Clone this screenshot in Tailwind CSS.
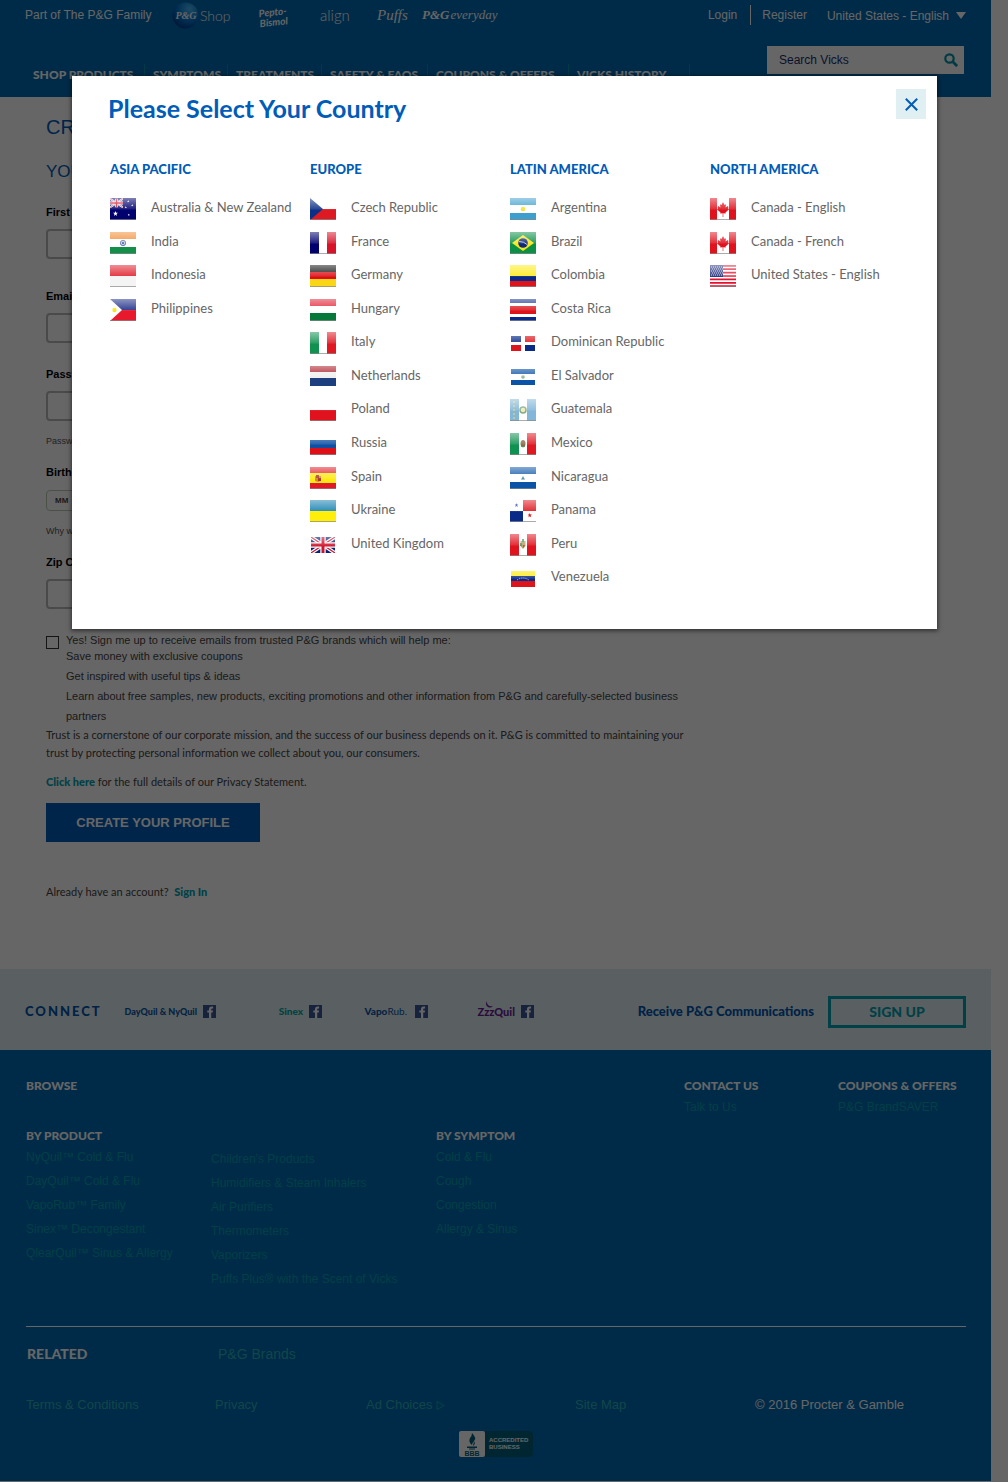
<!DOCTYPE html>
<html lang="en">
<head>
<meta charset="utf-8">
<title>Vicks - Create Your Profile</title>
<meta name="viewport" content="width=device-width, initial-scale=1">
<script src="https://cdn.jsdelivr.net/npm/@tailwindcss/browser@4"></script>
</head>
<body class="relative min-h-screen bg-white font-['Liberation_Sans',sans-serif] text-[12px] text-[#444]">

<!-- Flag artwork -->
<svg class="absolute size-0" aria-hidden="true">
  <defs>
    <linearGradient id="gloss" x1="0" y1="0" x2="0" y2="1">
      <stop offset="0" stop-color="#fff" stop-opacity=".5"/><stop offset=".5" stop-color="#fff" stop-opacity=".12"/><stop offset=".55" stop-color="#fff" stop-opacity="0"/>
    </linearGradient>
    <radialGradient id="ball" cx=".65" cy=".25" r=".9"><stop offset="0" stop-color="#4ab8f8"/><stop offset=".5" stop-color="#0077d0"/><stop offset="1" stop-color="#002a78"/></radialGradient>
    <symbol id="shine" viewBox="0 0 26 22"><path fill="url(#gloss)" d="M0 0h26v22H0z"/><path fill="#888" opacity=".7" d="M0 21h26v1H0z"/></symbol>
    <symbol id="jack" viewBox="0 0 24 16"><path fill="#00247d" d="M0 0h24v16H0z"/><path stroke="#fff" stroke-width="3.6" d="M0 0l24 16M24 0L0 16"/><path stroke="#cf142b" stroke-width="1.2" d="M0 0l24 16M24 0L0 16"/><path stroke="#fff" stroke-width="5.4" d="M12 0v16M0 8h24"/><path stroke="#cf142b" stroke-width="3" d="M12 0v16M0 8h24"/></symbol>
    <symbol id="star" viewBox="0 0 10 10"><path d="M5 0l1.3 3.5H10L7 5.8 8.1 10 5 7.4 1.9 10 3 5.8 0 3.5h3.7z"/></symbol>
    <symbol id="au" viewBox="0 0 26 22"><path fill="#00006e" d="M0 0h26v22H0z"/><use href="#jack" width="13" height="10" preserveAspectRatio="none"/><g fill="#fff"><use href="#star" x="3" y="13" width="5" height="5"/><use href="#star" x="17" y="2" width="2.5" height="2.5"/><use href="#star" x="14.500" y="8" width="2.500" height="2.500"/><use href="#star" x="21" y="6" width="2.500" height="2.500"/><use href="#star" x="17.500" y="15.500" width="2.500" height="2.500"/></g></symbol>
    <symbol id="in" viewBox="0 0 26 22"><path fill="#fff" d="M0 0h26v22H0z"/><path fill="#f28c33" d="M0 0h26v7H0z"/><path fill="#138f4a" d="M0 15h26v7H0z"/><circle cx="13" cy="11" r="2.700" fill="#c3cce8" stroke="#6f82bf"/><circle cx="13" cy="11" r="1" fill="#3a4f9f"/></symbol>
    <symbol id="id" viewBox="0 0 26 22"><path fill="#f4f4f4" d="M0 0h26v22H0z"/><path fill="#df1f2c" d="M0 0h26v11H0z"/></symbol>
    <symbol id="ph" viewBox="0 0 26 22"><path fill="#e8192c" d="M0 0h26v22H0z"/><path fill="#1a2a86" d="M0 0h26v11H0z"/><path fill="#fff" d="M0 0l12 11L0 22z"/><circle cx="4.500" cy="11" r="2.200" fill="#f5e51b"/></symbol>
    <symbol id="cz" viewBox="0 0 26 22"><path fill="#fff" d="M0 0h26v22H0z"/><path fill="#dd1a22" d="M0 11h26v11H0z"/><path fill="#0b2f86" d="M0 0l13 11L0 22z"/></symbol>
    <symbol id="fr" viewBox="0 0 26 22"><path fill="#fff" d="M0 0h26v22H0z"/><path fill="#00006e" d="M0 0h9v22H0z"/><path fill="#d81228" d="M17 0h9v22h-9z"/></symbol>
    <symbol id="de" viewBox="0 0 26 22"><path fill="#f9d616" d="M0 0h26v22H0z"/><path fill="#dd0d15" d="M0 0h26v14H0z"/><path fill="#111" d="M0 0h26v7H0z"/></symbol>
    <symbol id="hu" viewBox="0 0 26 22"><path fill="#fff" d="M0 0h26v22H0z"/><path fill="#e01e31" d="M0 0h26v7H0z"/><path fill="#06793a" d="M0 14h26v8H0z"/></symbol>
    <symbol id="it" viewBox="0 0 26 22"><path fill="#fff" d="M0 0h26v22H0z"/><path fill="#0f9150" d="M0 0h9v22H0z"/><path fill="#df1821" d="M17 0h9v22h-9z"/></symbol>
    <symbol id="nl" viewBox="0 0 26 22"><path fill="#eee" d="M0 0h26v20H0z"/><path fill="#a8121f" d="M0 0h26v6H0z"/><path fill="#1d3f80" d="M0 12h26v8H0z"/></symbol>
    <symbol id="pl" viewBox="0 0 26 22"><path fill="#fff" d="M0 0h26v22H0z"/><path fill="#e0121d" d="M0 11h26v11H0z"/></symbol>
    <symbol id="ru" viewBox="0 0 26 22"><path fill="#fff" d="M0 0h26v22H0z"/><path fill="#0d50a4" d="M0 7h26v8H0z"/><path fill="#de1017" d="M0 15h26v7H0z"/></symbol>
    <symbol id="es" viewBox="0 0 26 22"><path fill="#fdea14" d="M0 0h26v22H0z"/><path fill="#e01a25" d="M0 0h26v6H0zM0 16h26v6H0z"/><path fill="#d9892f" d="M5 9h6v5l-3 1-3-1z"/><path fill="#a8392c" d="M6 8h3v3h2v3H8v-3H6z"/></symbol>
    <symbol id="ua" viewBox="0 0 26 22"><path fill="#ffee0a" d="M0 0h26v22H0z"/><path fill="#137fb0" d="M0 0h26v11H0z"/></symbol>
    <symbol id="gb" viewBox="0 0 26 22"><use href="#jack" x="1" y="3" width="24" height="16"/></symbol>
    <symbol id="ar" viewBox="0 0 26 22"><path fill="#fff" d="M0 0h26v22H0z"/><path fill="#3d9fcd" d="M0 0h26v7H0zM0 15h26v7H0z"/><circle cx="13" cy="11" r="2.300" fill="#f5e332"/></symbol>
    <symbol id="br" viewBox="0 0 26 22"><path fill="#0c9048" d="M0 0h26v22H0z"/><path fill="#f7e61b" d="M13 3l11 8-11 8L2 11z"/><circle cx="13" cy="11" r="4.800" fill="#10297c"/><path d="M9 9.500q5 0 8 3" fill="none" stroke="#bcd" /></symbol>
    <symbol id="co" viewBox="0 0 26 22"><path fill="#fdec1a" d="M0 0h26v12H0z"/><path fill="#0a2a88" d="M0 11h26v6H0z"/><path fill="#de141c" d="M0 16h26v6H0z"/></symbol>
    <symbol id="cr" viewBox="0 0 26 22"><path fill="#fff" d="M0 0h26v22H0z"/><path fill="#0a2a88" d="M0 0h26v4H0zM0 18h26v4H0z"/><path fill="#de141c" d="M0 7h26v8H0z"/></symbol>
    <symbol id="do" viewBox="0 0 26 22"><path fill="#fff" d="M0 0h26v22H0z"/><path fill="#0a2a88" d="M1 4h10v6H1zM15 13h10v6H15z"/><path fill="#de141c" d="M15 4h10v6H15zM1 13h10v6H1z"/></symbol>
    <symbol id="sv" viewBox="0 0 26 22"><path fill="#fff" d="M0 0h26v22H0z"/><path fill="#0b53a6" d="M1 3h24v5H1zM1 14h24v5H1z"/><circle cx="13" cy="11" r="1.800" fill="#8bb78f"/></symbol>
    <symbol id="gt" viewBox="0 0 26 22"><path fill="#fff" d="M0 0h26v22H0z"/><path fill="#83b7da" d="M0 0h9v22H0zM17 0h9v22h-9z"/><path d="M4 2v18" stroke="#d6cf7a" stroke-width="1.500" stroke-dasharray="2 2"/><circle cx="13" cy="11" r="3" fill="#f3e9b8" stroke="#7fae86" stroke-width="1.500"/></symbol>
    <symbol id="mx" viewBox="0 0 26 22"><path fill="#fff" d="M0 0h26v22H0z"/><path fill="#0f9150" d="M0 0h9v22H0z"/><path fill="#df1821" d="M17 0h9v22h-9z"/><ellipse cx="13" cy="10.500" rx="2.500" ry="3.500" fill="#8a6b4a"/><path d="M11 13q2 2 4 0" stroke="#4f9257" fill="none"/></symbol>
    <symbol id="ni" viewBox="0 0 26 22"><path fill="#fff" d="M0 0h26v22H0z"/><path fill="#0b53a6" d="M0 0h26v7H0zM0 15h26v7H0z"/><path fill="#4d93a0" d="M13 9l2 3.500h-4z"/></symbol>
    <symbol id="pa" viewBox="0 0 26 22"><path fill="#fff" d="M0 0h26v22H0z"/><path fill="#de141c" d="M13 0h13v11H13z"/><path fill="#0a2a88" d="M0 11h13v11H0z"/><use href="#star" x="4.500" y="3" width="4" height="4" fill="#123a9c"/><use href="#star" x="17.500" y="13" width="4.500" height="4.500" fill="#de141c"/></symbol>
    <symbol id="pe" viewBox="0 0 26 22"><path fill="#fff" d="M0 0h26v22H0z"/><path fill="#e0121d" d="M0 0h9v22H0zM17 0h9v22h-9z"/><path fill="#b9a06c" d="M10.500 7h5v5l-2.500 3-2.500-3z"/><path fill="#4d9b62" d="M12 5h2v3h-2zM10 9h2v3h-2z"/><path fill="#d9402c" d="M13 11h2l-2 3z"/></symbol>
    <symbol id="ve" viewBox="0 0 26 22"><path fill="#fff" d="M0 0h26v22H0z"/><path fill="#fdec1a" d="M1 4h24v5H1z"/><path fill="#0a2a88" d="M1 9h24v6H1z"/><path fill="#de141c" d="M1 14h24v6H1z"/><path d="M7 13q6-4 12 0" stroke="#cdd6f2" stroke-dasharray="1 1" fill="none"/></symbol>
    <symbol id="ca" viewBox="0 0 26 22"><path fill="#fff" d="M0 0h26v22H0z"/><path fill="#e0121d" d="M0 0h7v22H0zM19 0h7v22h-7z"/><path fill="#e0121d" d="M13 4l1.500 3 1.500-.8-.4 3.300 2.200-1.500.6 1-.3 1.500 1 .7-3.600 3.300.3 1.100-2.500-.4V19h-.6v-3.800l-2.500.4.3-1.100-3.600-3.300 1-.7-.3-1.500.6-1 2.200 1.500-.4-3.300 1.500.8z"/></symbol>
    <symbol id="us" viewBox="0 0 26 22"><path fill="#fff" d="M0 0h26v22H0z"/><path stroke="#dd1530" stroke-width="1.700" d="M0 .9h26M0 4.200h26M0 7.600h26M0 11h26M0 14.400h26M0 17.800h26M0 21.100h26"/><path fill="#23307d" d="M0 0h13v12H0z"/><path stroke="#c9cdea" stroke-dasharray="1 1" d="M1 2h11M2 4h11M1 6h11M2 8h11M1 10h11"/></symbol>
    <symbol id="fb" viewBox="0 0 13 13"><path fill="#3b5998" d="M0 0h13v13H0z"/><path fill="#fff" d="M6 13V7.500H4.300v-2H6V4.200C6 2.400 7 1.500 8.700 1.500h1.400v2H9c-.6 0-.8.3-.8.900v1.100H10l-.3 2H8.200V13z"/></symbol>
  </defs>
</svg>

<div class="mr-[17px]">
  <header class="h-[97px] bg-[#006bb4] text-white">
    <div class="flex h-[30px] items-center pr-[25px] pl-[25px]">
      <p class="w-[147px]">Part of The P&amp;G Family</p>
      <nav aria-label="Brands" class="flex flex-1 items-center font-['Lato',sans-serif]">
        <a href="#" class="flex w-[87px] items-center gap-px text-[14px] font-light">
          <svg class="size-[27px]" viewBox="0 0 27 27"><circle cx="13.500" cy="13.500" r="13" fill="url(#ball)"/><text x="14" y="17" text-anchor="middle" font-family="Liberation Serif" font-style="italic" font-weight="bold" font-size="10" fill="#fff">P&amp;G</text></svg>Shop</a>
        <a href="#" class="flex w-[61px] -rotate-6 flex-col text-[10px] leading-[10px] font-bold italic"><span>Pepto-</span><span>Bismol</span></a>
        <a href="#" class="w-[57px] text-[15px] font-light">align</a>
        <a href="#" class="w-[45px] font-['Liberation_Serif',serif] text-[15px] italic">Puffs</a>
        <a href="#" class="flex items-baseline font-['Liberation_Serif',serif] text-[13px] italic"><b>P&amp;G</b>&#8202;<span>everyday</span></a>
      </nav>
      <a href="#" class="border-r border-white pr-[13px] leading-5">Login</a>
      <a href="#" class="pr-5 pl-[11px]">Register</a>
      <button type="button" class="flex items-center gap-[7px] pt-px">United States - English
        <svg class="h-[7px] w-[10px]" viewBox="0 0 10 7"><path fill="#fff" d="M0 0h10L5 7z"/></svg></button>
    </div>
    <div class="flex items-start justify-between pr-[27px] pl-6">
      <nav aria-label="Main" class="flex pt-[34px] font-['Lato',sans-serif] text-[12px] leading-[22px] font-black whitespace-nowrap">
        <a href="#" class="w-[121px] border-r border-[#0090b0] pl-[9px]">SHOP PRODUCTS</a>
        <a href="#" class="w-[83px] border-r border-[#0090b0] pl-[8px]">SYMPTOMS</a>
        <a href="#" class="w-[94px] border-r border-[#0090b0] pl-[8px]">TREATMENTS</a>
        <a href="#" class="w-[106px] border-r border-[#0090b0] pl-[8px]">SAFETY &amp; FAQS</a>
        <a href="#" class="w-[141px] border-r border-[#0090b0] pl-[8px]">COUPONS &amp; OFFERS</a>
        <a href="#" class="w-[121px] border-r border-[#0090b0] pl-[8px]">VICKS HISTORY</a>
      </nav>
      <form class="mt-4 flex h-7 w-[197px] items-center bg-white pr-[6px] pl-3">
        <input aria-label="Search Vicks" placeholder="Search Vicks" class="min-w-0 flex-1 text-[12px] placeholder:text-[#1a2f6b]">
        <button type="button" aria-label="Search"><svg class="size-[14px]" viewBox="0 0 14 14" fill="none" stroke="#0093a8"><circle cx="5.500" cy="5.500" r="4.200" stroke-width="2.200"/><path d="M8.800 8.800l4.300 4.300" stroke-width="2.800"/></svg></button>
      </form>
    </div>
  </header>

  <main class="px-[46px] pt-[18px] pb-[68px]">
    <form class="max-w-[644px] text-[11px]">
      <h1 class="text-[20px] leading-6 text-[#005cb9]">CREATE YOUR PROFILE</h1>
      <h2 class="mt-[21px] text-[17px] leading-6 text-[#005cb9]">YOUR INFORMATION</h2>
      <label for="fn" class="mt-5 block leading-4 font-bold text-black">First Name</label>
      <input id="fn" class="mt-[9px] block h-[30px] w-[280px] rounded border-2 border-[#bababa] px-2">
      <label for="em" class="mt-[29px] block leading-4 font-bold text-black">Email</label>
      <input id="em" type="email" class="mt-[9px] block h-[30px] w-[280px] rounded border-2 border-[#bababa] px-2">
      <label for="pw" class="mt-[23px] block leading-4 font-bold text-black">Password</label>
      <input id="pw" type="password" class="mt-[9px] block h-[30px] w-[280px] rounded border-2 border-[#bababa] px-2">
      <p class="mt-[14px] text-[9px] leading-3 text-[#555]">Password must be at least 6 characters</p>
      <label for="bd" class="mt-[17px] block leading-4 font-bold text-black">Birthdate</label>
      <select id="bd" class="mt-[10px] block h-[21px] w-[90px] rounded border border-[#b8ccb4] bg-white px-1 text-[8px] font-bold"><option>MM</option></select>
      <p class="mt-[14px] text-[9px] leading-3 text-[#555]">Why we ask for your birthdate</p>
      <label for="zp" class="mt-[17px] block leading-4 font-bold text-black">Zip Code</label>
      <input id="zp" class="mt-[9px] block h-[30px] w-[280px] rounded border-2 border-[#bababa] px-2">
      <div class="mt-[25px] flex items-start gap-[7px]">
        <input id="opt" type="checkbox" class="mt-[2px] size-[13px] shrink-0 appearance-none border border-[#333]">
        <div>
          <label for="opt" class="block leading-3">Yes! Sign me up to receive emails from trusted P&amp;G brands which will help me:</label>
          <ul class="leading-5">
            <li>Save money with exclusive coupons</li>
            <li>Get inspired with useful tips &amp; ideas</li>
            <li>Learn about free samples, new products, exciting promotions and other information from P&amp;G and carefully-selected business partners</li>
          </ul>
        </div>
      </div>
      <div class="font-['Lato',sans-serif] leading-[18px]">
        <p>Trust is a cornerstone of our corporate mission, and the success of our business depends on it. P&amp;G is committed to maintaining your trust by protecting personal information we collect about you, our consumers.</p>
        <p class="mt-[11px]"><a href="#" class="font-black text-[#00a0b0]">Click here</a> for the full details of our Privacy Statement.</p>
      </div>
      <button type="button" class="mt-3 h-[39px] w-[214px] bg-[#005cb9] text-[13px] font-bold text-white">CREATE YOUR PROFILE</button>
      <p class="mt-[41px] font-['Lato',sans-serif] leading-[18px]">Already have an account? &nbsp;<a href="#" class="font-black text-[#00a0b0]">Sign In</a></p>
    </form>
  </main>

  <section class="flex h-[81px] items-center bg-[#e0eff2] pt-[4px] pr-[25px] pl-[25px] font-['Lato',sans-serif]">
    <h2 class="w-[85px] text-[13px] font-black tracking-[2px] text-[#0055b0]">CONNECT</h2>
    <div class="flex flex-1 leading-[13px] font-black">
      <a href="#" class="flex w-[106px] items-center justify-end gap-[6px] text-[9px] whitespace-nowrap text-[#0c55a5]">DayQuil &amp; NyQuil<svg class="size-[13px]"><use href="#fb"/></svg></a>
      <a href="#" class="flex w-[106px] items-center justify-end gap-[6px] text-[10px] text-[#00a79d]">Sinex<svg class="size-[13px]"><use href="#fb"/></svg></a>
      <a href="#" class="flex w-[106px] items-center justify-end gap-2 text-[10px] text-[#0c55a5]"><span>Vapo<span class="font-normal">Rub.</span></span><svg class="size-[13px]"><use href="#fb"/></svg></a>
      <a href="#" class="flex w-[106px] items-center justify-end gap-[6px] text-[11px] text-[#6a1b9a]"><span class="relative">ZzzQuil<svg class="absolute -top-1 left-2 size-2" viewBox="0 0 8 8"><path fill="#6a1b9a" d="M1.500 0Q0 4 3 6q3 1.500 5-1Q5 6 3 4 1.500 2.500 1.500 0z"/></svg></span><svg class="size-[13px]"><use href="#fb"/></svg></a>
    </div>
    <p class="mr-[14px] text-[13px] font-black text-[#0055b0]">Receive P&amp;G Communications</p>
    <button type="button" class="h-8 w-[138px] border-3 border-[#00a0b0] text-[14px] font-black text-[#00a0b0]">SIGN UP</button>
  </section>

  <footer class="bg-[#006bb4] pt-[26px] pr-[25px] pb-6 pl-[26px] text-white">
    <div class="grid grid-cols-[185px_225px_1fr_154px_128px] leading-6 text-[#00a0b0]">
      <h3 class="col-span-3 pt-px font-['Lato',sans-serif] leading-[18px] font-black text-white">BROWSE</h3>
      <div><h3 class="pt-px font-['Lato',sans-serif] leading-[18px] font-black text-white">CONTACT US</h3></div>
      <div><h3 class="pt-px font-['Lato',sans-serif] leading-[18px] font-black text-white">COUPONS &amp; OFFERS</h3></div>
      <a href="#" class="col-start-4">Talk to Us</a><a href="#">P&amp;G BrandSAVER</a>
      <div class="mt-2">
        <h3 class="font-['Lato',sans-serif] leading-[18px] font-black text-white">BY PRODUCT</h3>
        <ul><li><a href="#">NyQuil™ Cold &amp; Flu</a></li><li><a href="#">DayQuil™ Cold &amp; Flu</a></li><li><a href="#">VapoRub™ Family</a></li><li><a href="#">Sinex™ Decongestant</a></li><li><a href="#">QlearQuil™ Sinus &amp; Allergy</a></li></ul>
      </div>
      <ul class="mt-[28px]"><li><a href="#">Children's Products</a></li><li><a href="#">Humidifiers &amp; Steam Inhalers</a></li><li><a href="#">Air Purifiers</a></li><li><a href="#">Thermometers</a></li><li><a href="#">Vaporizers</a></li><li><a href="#">Puffs Plus® with the Scent of Vicks</a></li></ul>
      <div class="mt-2">
        <h3 class="font-['Lato',sans-serif] leading-[18px] font-black text-white">BY SYMPTOM</h3>
        <ul><li><a href="#">Cold &amp; Flu</a></li><li><a href="#">Cough</a></li><li><a href="#">Congestion</a></li><li><a href="#">Allergy &amp; Sinus</a></li></ul>
      </div>
    </div>
    <div class="mt-[35px] flex items-center border-t border-white pt-[17px] leading-5">
      <h3 class="w-[192px] pl-px font-['Lato',sans-serif] text-[14px] font-black">RELATED</h3>
      <a href="#" class="text-[14px] text-[#2ab0b8]">P&amp;G Brands</a>
    </div>
    <div class="mt-[31px] grid grid-cols-[189px_151px_209px_180px_1fr] text-[13px] leading-5 text-[#2ab0b8]">
      <a href="#">Terms &amp; Conditions</a><a href="#">Privacy</a>
      <a href="#" class="flex items-center gap-1">Ad Choices<svg class="size-[9px]" viewBox="0 0 9 9"><path d="M1 .500l7 4-7 4z" fill="none" stroke="#00a0b0" stroke-width="1.200"/></svg></a>
      <a href="#">Site Map</a><p class="text-white">© 2016 Procter &amp; Gamble</p>
    </div>
    <a href="#" class="mx-auto mt-4 flex h-[26px] w-[74px] items-center gap-1 rounded-sm bg-[#00627a] text-[6px] leading-[7px] font-bold">
      <svg class="h-[26px] w-[26px] shrink-0" viewBox="0 0 26 26"><rect width="26" height="26" rx="2" fill="#fff"/><path fill="#00627a" d="M13 2q5 5 2 8-2 2-2 4-4-3-2-7 2-2 2-5zM15 10q2 3-1 5zM8 15.500h10V17H8zM10 17.500h6v1h-6z"/><text x="13" y="24.500" text-anchor="middle" font-family="Liberation Sans" font-size="7" font-weight="bold" fill="#00627a">BBB</text></svg>
      <span>ACCREDITED<br>BUSINESS</span></a>
  </footer>
</div>

<!-- Country selector dialog over a dimmed page -->
<div class="absolute inset-0 flex items-start bg-black/60 px-[71px] pt-[76px]">
  <div role="dialog" aria-labelledby="dlg" class="ml-px w-full bg-white pb-7 font-['Lato',sans-serif] text-[#666] shadow-[0_1px_4px_1px_rgba(0,0,0,0.5)]">
    <div class="flex items-start justify-between pt-[13px] pr-[11px] pl-9">
      <h2 id="dlg" class="pt-[3px] text-[25px] leading-8 font-bold text-[#005cb9]">Please Select Your Country</h2>
      <button type="button" aria-label="Close" class="flex size-[30px] items-center justify-center bg-[#e0eff2]"><svg class="size-[13px]" viewBox="0 0 13 13" fill="none" stroke="#005cb9" stroke-width="2"><path d="M.800.800l11.400 11.400M12.200.800L.800 12.200"/></svg></button>
    </div>
    <div class="mt-9 grid grid-cols-[200px_200px_200px_1fr] pl-[38px] text-[13px] leading-[18px] whitespace-nowrap" id="regions"></div>
  </div>
</div>

<script>
const regions = [
  ["ASIA PACIFIC", [["au","Australia & New Zealand"],["in","India"],["id","Indonesia"],["ph","Philippines"]]],
  ["EUROPE", [["cz","Czech Republic"],["fr","France"],["de","Germany"],["hu","Hungary"],["it","Italy"],["nl","Netherlands"],["pl","Poland"],["ru","Russia"],["es","Spain"],["ua","Ukraine"],["gb","United Kingdom"]]],
  ["LATIN AMERICA", [["ar","Argentina"],["br","Brazil"],["co","Colombia"],["cr","Costa Rica"],["do","Dominican Republic"],["sv","El Salvador"],["gt","Guatemala"],["mx","Mexico"],["ni","Nicaragua"],["pa","Panama"],["pe","Peru"],["ve","Venezuela"]]],
  ["NORTH AMERICA", [["ca","Canada - English"],["ca","Canada - French"],["us","United States - English"]]]
];
// These flags are drawn smaller than the full tile, so they carry no bottom edge.
const inset = ["gb", "do", "sv", "ve", "nl"];
document.getElementById("regions").innerHTML = regions.map(([name, list]) => `
  <section>
    <h3 class="font-black text-[#005cb9]">${name}</h3>
    <ul class="mt-[20px] grid h-[403px] grid-rows-12">${list.map(([code, label]) => `
      <li><a href="#" class="flex items-start gap-[15px]"><svg class="h-[22px] w-[26px] shrink-0" viewBox="0 0 26 22"><use href="#${code}"/>${inset.includes(code) ? '<path fill="url(#gloss)" d="M0 0h26v22H0z"/>' : '<use href="#shine"/>'}</svg><span>${label.replace("&", "&amp;")}</span></a></li>`).join("")}
    </ul>
  </section>`).join("");
</script>
</body>
</html>
